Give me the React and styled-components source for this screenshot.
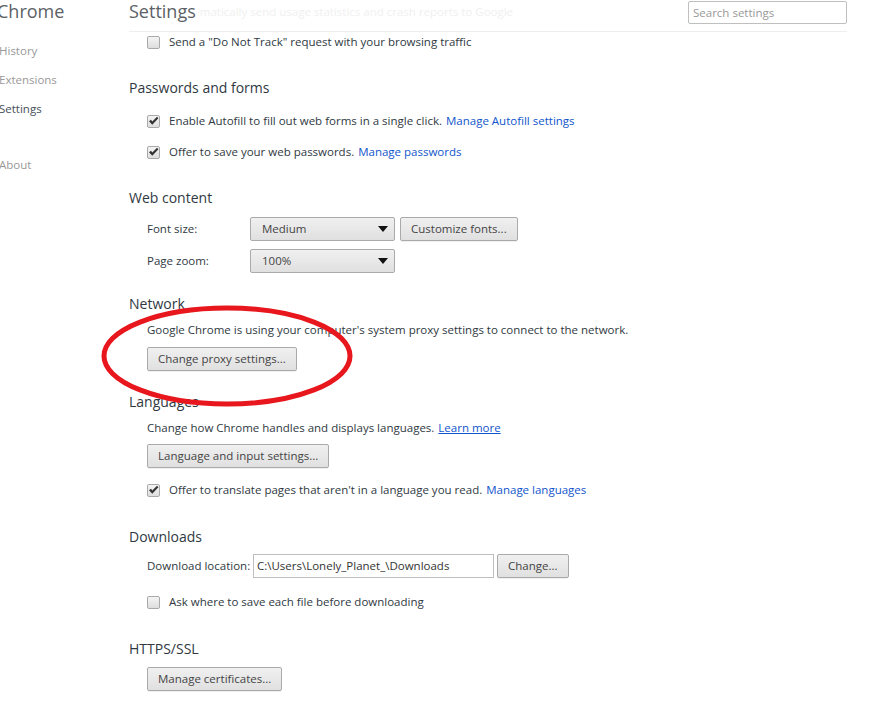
import React from "react";
import styled, { createGlobalStyle } from "styled-components";

const GlobalStyle = createGlobalStyle`
  html, body {
    margin: 0;
    padding: 0;
    background: #fff;
    overflow: hidden;
  }
  body {
    font-family: "Open Sans", "Noto Sans", Arial, sans-serif;
    font-size: 11.5px;
    color: #303942;
  }
`;

const Page = styled.div`
  position: relative;
  display: grid;
  grid-template-columns: 129px 1fr;
  width: 877px;
  height: 716px;
  overflow: hidden;
`;

const Nav = styled.nav`
  display: flex;
  flex-direction: column;
  margin-left: -3px;
`;

const NavTitle = styled.div`
  font-size: 18px;
  line-height: 22px;
  color: #5c6166;
  margin-bottom: 21px;
`;

const NavItem = styled.div`
  font-size: 11.5px;
  line-height: 16px;
  height: 29px;
  margin-top: ${(p) => p.$gap || 0}px;
  padding-left: 2px;
  color: ${(p) => (p.$active ? "#464e5a" : "#999")};
`;

const Main = styled.main`
  display: flex;
  flex-direction: column;
  width: 718px;
`;

const Header = styled.header`
  display: flex;
  align-items: flex-start;
  height: 31px;
  border-bottom: 1px solid #eee;
  overflow: hidden;
`;

const Title = styled.h1`
  margin: 0;
  padding-right: 4px;
  font-size: 18px;
  font-weight: normal;
  line-height: 22px;
  color: #5c6166;
`;

const FadedText = styled.span`
  margin-top: 3px;
  line-height: 18px;
  color: #f0f0f0;
  white-space: nowrap;
`;

const Search = styled.input`
  margin-left: auto;
  margin-top: 1px;
  width: 159px;
  height: 23px;
  box-sizing: border-box;
  border: 1px solid #bfbfbf;
  border-radius: 2px;
  padding: 0 4px;
  font: inherit;
  font-size: 11.5px;
  color: #333;
  &::placeholder {
    color: #999;
  }
`;

const Heading = styled.h3`
  margin: ${(p) => p.$gap || 26}px 0 0;
  font-size: 14px;
  font-weight: normal;
  line-height: 20px;
  height: 20px;
  color: #303942;
`;

const Item = styled.div`
  display: flex;
  align-items: center;
  margin-top: ${(p) => p.$gap || 0}px;
  margin-left: 18px;
  min-height: ${(p) => p.$h || 20}px;
  line-height: 20px;
  white-space: nowrap;
`;

const Box = styled.span`
  display: inline-flex;
  align-items: center;
  justify-content: center;
  width: 13px;
  height: 13px;
  box-sizing: border-box;
  margin-right: 9px;
  border: 1px solid #a9a9a9;
  border-radius: 2px;
  background: linear-gradient(#f4f4f4, #dedede);
  flex-shrink: 0;
`;

const Link = styled.a`
  color: #15c;
  margin-left: 4px;
  text-decoration: ${(p) => (p.$underline ? "underline" : "none")};
`;

const Label = styled.span`
  width: ${(p) => p.$w || 103}px;
  flex-shrink: 0;
`;

const Button = styled.button`
  height: 24px;
  box-sizing: border-box;
  padding: 0 10px;
  margin-left: ${(p) => p.$gap || 0}px;
  border: 1px solid #aaa;
  border-radius: 2px;
  background: linear-gradient(#f0f0f0, #e0e0e0);
  box-shadow: 0 1px 0 rgba(0, 0, 0, 0.06);
  font: inherit;
  font-size: 11.5px;
  color: #444;
  line-height: 20px;
  cursor: pointer;
`;

const Select = styled.div`
  display: flex;
  align-items: center;
  justify-content: space-between;
  width: 145px;
  height: 24px;
  box-sizing: border-box;
  padding: 0 6px 0 11px;
  border: 1px solid #aaa;
  border-radius: 2px;
  background: linear-gradient(#f0f0f0, #e0e0e0);
  color: #444;
`;

const Arrow = styled.span`
  width: 0;
  height: 0;
  border-left: 5px solid transparent;
  border-right: 5px solid transparent;
  border-top: 6px solid #111;
`;

const PathInput = styled.div`
  display: flex;
  align-items: center;
  width: 241px;
  height: 24px;
  box-sizing: border-box;
  padding: 0 3px;
  border: 1px solid #bfbfbf;
  color: #333;
`;

const Annotation = styled.svg`
  position: absolute;
  left: 98px;
  top: 302px;
  pointer-events: none;
`;

const Check = ({ checked }) => (
  <Box>
    {checked && (
      <svg width="11" height="10" viewBox="0 0 11 10">
        <path d="M1 5.2 L3 3.8 L4.3 5.6 L9 0.8 L10.4 2.2 L4.3 8.8 Z" fill="#333" />
      </svg>
    )}
  </Box>
);

const CheckRow = ({ checked, gap, children }) => (
  <Item $gap={gap}>
    <Check checked={checked} />
    <span>{children}</span>
  </Item>
);

export default function App() {
  return (
    <>
      <GlobalStyle />
      <Page>
        <Nav>
          <NavTitle>Chrome</NavTitle>
          <NavItem>History</NavItem>
          <NavItem>Extensions</NavItem>
          <NavItem $active>Settings</NavItem>
          <NavItem $gap={27}>About</NavItem>
        </Nav>

        <Main>
          <Header>
            <Title>Settings</Title>
            <FadedText>matically send usage statistics and crash reports to Google</FadedText>
            <Search placeholder="Search settings" />
          </Header>

          <CheckRow>Send a "Do Not Track" request with your browsing traffic</CheckRow>

          <Heading>Passwords and forms</Heading>
          <CheckRow checked gap={13}>
            Enable Autofill to fill out web forms in a single click.
            <Link href="#">Manage Autofill settings</Link>
          </CheckRow>
          <CheckRow checked gap={11}>
            Offer to save your web passwords.
            <Link href="#">Manage passwords</Link>
          </CheckRow>

          <Heading>Web content</Heading>
          <Item $gap={9} $h={24}>
            <Label>Font size:</Label>
            <Select>
              Medium
              <Arrow />
            </Select>
            <Button $gap={5}>Customize fonts...</Button>
          </Item>
          <Item $gap={8} $h={24}>
            <Label>Page zoom:</Label>
            <Select>
              100%
              <Arrow />
            </Select>
          </Item>

          <Heading $gap={21}>Network</Heading>
          <Item $gap={6}>
            Google Chrome is using your computer's system proxy settings to connect to the network.
          </Item>
          <Item $gap={7} $h={24}>
            <Button>Change proxy settings...</Button>
          </Item>

          <Heading $gap={21}>Languages</Heading>
          <Item $gap={6}>
            Change how Chrome handles and displays languages.
            <Link href="#" $underline>
              Learn more
            </Link>
          </Item>
          <Item $gap={6} $h={24}>
            <Button>Language and input settings...</Button>
          </Item>
          <CheckRow checked gap={12}>
            Offer to translate pages that aren't in a language you read.
            <Link href="#">Manage languages</Link>
          </CheckRow>

          <Heading $gap={27}>Downloads</Heading>
          <Item $gap={7} $h={24}>
            <Label $w={106}>Download location:</Label>
            <PathInput>C:\Users\Lonely_Planet_\Downloads</PathInput>
            <Button $gap={3}>Change...</Button>
          </Item>
          <CheckRow gap={14}>Ask where to save each file before downloading</CheckRow>

          <Heading $gap={27}>HTTPS/SSL</Heading>
          <Item $gap={8} $h={24}>
            <Button>Manage certificates...</Button>
          </Item>
        </Main>

        <Annotation width="262" height="108" viewBox="0 0 262 108">
          <ellipse cx="129" cy="54" rx="123" ry="48" fill="none" stroke="#e8161d" strokeWidth="5" />
        </Annotation>
      </Page>
    </>
  );
}
